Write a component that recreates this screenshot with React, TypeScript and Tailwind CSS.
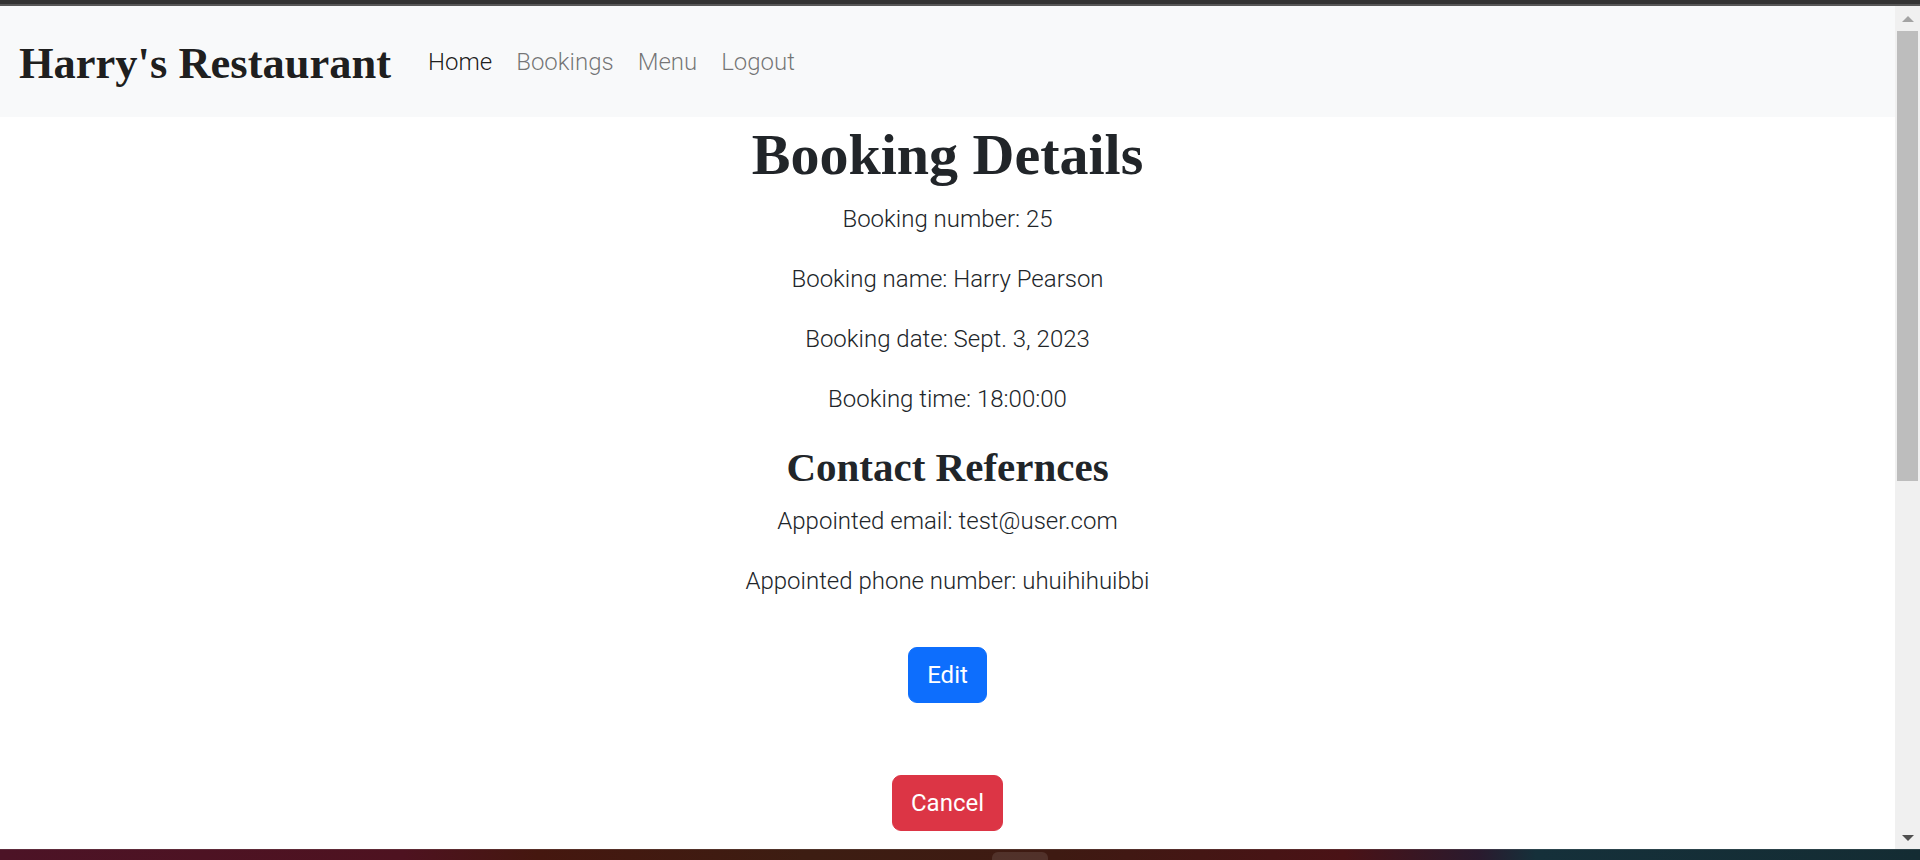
import React from 'react';

const serif = { fontFamily: '"Liberation Serif", "Times New Roman", serif' };

const details = [
  'Booking number: 25',
  'Booking name: Harry Pearson',
  'Booking date: Sept. 3, 2023',
  'Booking time: 18:00:00',
];

const contacts = ['Appointed email: test@user.com', 'Appointed phone number: uhuihihuibbi'];

function Navbar() {
  return (
    <nav className="h-[111px] shrink-0 bg-[#f8f9fa] flex items-start px-[19px]">
      <a
        href="#"
        style={serif}
        className="mt-[35px] text-[44.5px] leading-[45px] font-bold text-black/90 mr-[25px] whitespace-nowrap"
      >
        Harry's Restaurant
      </a>
      <ul className="mt-[38px] flex text-[24px] leading-[36px] font-light">
        <li>
          <a href="#" className="px-[12px] text-black/90">
            Home
          </a>
        </li>
        <li>
          <a href="#" className="px-[12px] text-black/55">
            Bookings
          </a>
        </li>
        <li>
          <a href="#" className="px-[12px] text-black/55">
            Menu
          </a>
        </li>
        <li>
          <a href="#" className="px-[12px] text-black/55">
            Logout
          </a>
        </li>
      </ul>
    </nav>
  );
}

function Scrollbar() {
  return (
    <div className="w-[25px] shrink-0 bg-[#f0f0f0] flex flex-col items-center pt-[10px] pb-[8px]">
      <svg width="12" height="6" viewBox="0 0 12 6">
        <polygon points="6,0 12,6 0,6" fill="#a3a3a3" />
      </svg>
      <div className="mt-[9px] w-[21px] h-[450px] bg-[#bdbdbd]" />
      <div className="flex-1" />
      <svg width="12" height="6" viewBox="0 0 12 6">
        <polygon points="0,0 12,0 6,6" fill="#505050" />
      </svg>
    </div>
  );
}

export default function App() {
  return (
    <div
      className="h-[860px] w-[1920px] flex flex-col overflow-hidden bg-white text-[#212529]"
      style={{ fontFamily: 'Roboto, "Liberation Sans", sans-serif' }}
    >
      {/* browser chrome edge */}
      <div className="h-[4px] shrink-0 bg-[#333333]" />
      <div className="h-[2px] shrink-0 bg-[#575757]" />

      <div className="flex flex-1 min-h-0">
        <div className="flex-1 flex flex-col min-w-0 overflow-hidden">
          <Navbar />

          <main className="flex flex-col items-center text-center">
            <h1 style={serif} className="pt-[2px] text-[58px] leading-[72px] font-bold mb-[10px]">
              Booking Details
            </h1>
            {details.map((line) => (
              <p key={line} className="text-[24px] leading-[36px] font-light mb-[24px]">
                {line}
              </p>
            ))}

            <h3 style={serif} className="text-[41px] leading-[48px] pt-[2px] font-bold mb-[12px]">
              Contact Refernces
            </h3>
            {contacts.map((line) => (
              <p key={line} className="text-[24px] leading-[36px] font-light mb-[24px]">
                {line}
              </p>
            ))}

            <button className="mt-[24px] px-[18px] py-[9px] border border-[#0d6efd] bg-[#0d6efd] text-white text-[24px] leading-[36px] font-normal rounded-[9px]">
              Edit
            </button>
            <button className="mt-[72px] px-[18px] py-[9px] border border-[#dc3545] bg-[#dc3545] text-white text-[24px] leading-[36px] font-normal rounded-[9px]">
              Cancel
            </button>
          </main>
        </div>
        <Scrollbar />
      </div>

      {/* desktop taskbar edge */}
      <div className="h-[11px] shrink-0 flex border-t border-white/10 bg-[linear-gradient(90deg,#4c1326_0%,#4e1220_21%,#45170f_28%,#3d1d12_42%,#3e1a12_55%,#4a1216_70%,#2a1a2e_77%,#15303a_80%,#142c33_100%)]">
        <div className="ml-[992px] mt-[2px] w-[56px] h-[9px] rounded-t-[6px] bg-white/10" />
      </div>
    </div>
  );
}
